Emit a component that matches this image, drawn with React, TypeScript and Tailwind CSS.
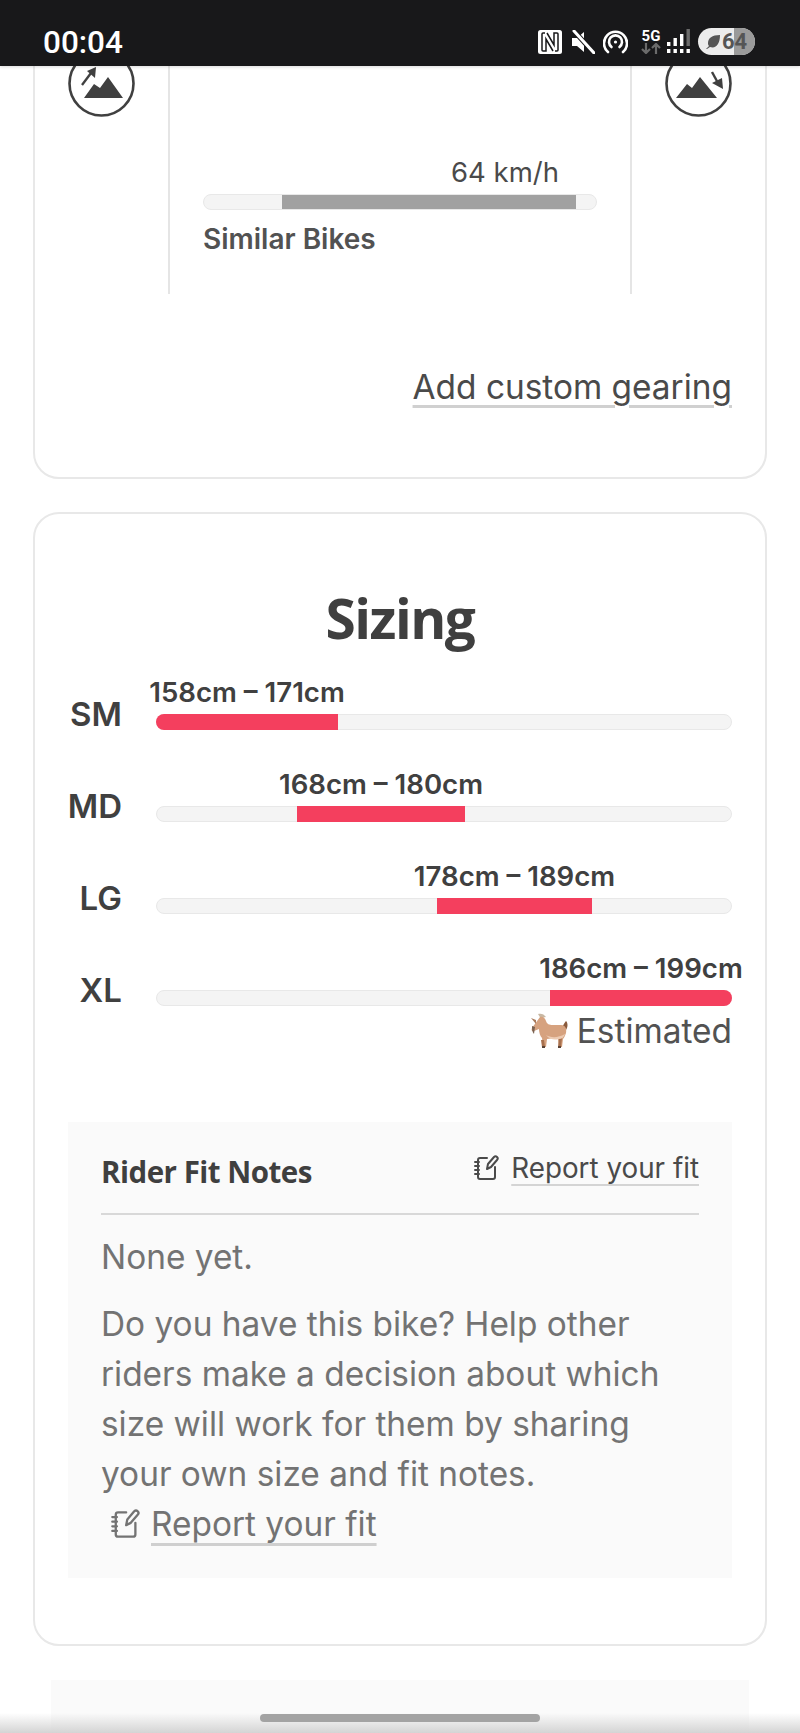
const ROWS = [
  { size: "SM", range: "158cm – 171cm", left: 0, width: 182, cls: "rounded-l-full" },
  { size: "MD", range: "168cm – 180cm", left: 141, width: 168, cls: "" },
  { size: "LG", range: "178cm – 189cm", left: 281, width: 155, cls: "" },
  { size: "XL", range: "186cm – 199cm", left: 394, width: 182, cls: "rounded-r-full" },
];

function Mountain({ down }: { down?: boolean }) {
  return (
    <svg viewBox="0 0 67 67" className="w-[67px] h-[67px] text-[#404040]">
      <circle cx="33.5" cy="33.5" r="32" fill="#fff" stroke="currentColor" strokeWidth="2.6" />
      <path d={down ? "M11 48 L22 34 L27 38 L35 27 L52 48 Z" : "M16 48 L26 34 L32 38 L40 27 L55 48 Z"} fill="currentColor" />
      {down ? (
        <>
          <path d="M47 22 L53 33" stroke="currentColor" strokeWidth="2.4" />
          <path d="M58 39 L47 33 L57 28 Z" fill="currentColor" />
        </>
      ) : (
        <>
          <path d="M14 35 L23 23" stroke="currentColor" strokeWidth="2.4" />
          <path d="M28 17 L19 21 L27 28 Z" fill="currentColor" />
        </>
      )}
    </svg>
  );
}

function Notebook({ className }: { className: string }) {
  return (
    <svg viewBox="0 0 26 26" fill="none" stroke="currentColor" strokeWidth="2" strokeLinecap="round" strokeLinejoin="round" className={className}>
      <path d="M14 3H7a2 2 0 0 0-2 2v17a2 2 0 0 0 2 2h13a2 2 0 0 0 2-2V12" />
      <path d="M2 7h4M2 11h4M2 15h4M2 19h4" />
      <path d="M14 14l1-5 6-7a2 2 0 0 1 3 3l-6 7z" />
    </svg>
  );
}

function Goat() {
  return (
    <svg viewBox="0 0 38 36" className="w-[38px] h-[36px]">
      <path d="M8 1c3-1 6 0 8 3l-5 1C10 4 9 3 8 1z" fill="#c9b8a3" />
      <path d="M32 14c2-3 3-5 4-6 2 2 2 6 0 9z" fill="#8a5a3c" />
      <path d="M10 4c3-1 5 1 6 4 1 3 3 4 7 4h8c4 0 6 3 5 8-1 3-2 5-3 6l-1 8h-3l-1-8-3-1-8 1-1 8h-3l-1-9c-2-2-3-6-3-9l-5 2c-2 1-3-1-2-3z" fill="#d6a27f" />
      <path d="M11 27h3l1 7h-3zM29 25h3l-1 9h-3z" fill="#a8714f" />
      <path d="M12 33h3v2h-3zM28 33h3v2h-3z" fill="#5a4336" />
      <path d="M16 22c5 3 12 3 19-1-1 3-3 5-6 5-4 1-9 1-13-4z" fill="#edcbb3" />
      <path d="M2 13l3 1-1 7c-2-2-2-5-2-8z" fill="#7a6252" />
      <path d="M6 7L1 5l5 6z" fill="#a87a5c" />
    </svg>
  );
}

function StatusIcons() {
  return (
    <div className="flex items-center h-[27px]">
      <svg viewBox="0 0 24 24" className="w-6 h-6">
        <rect width="24" height="24" rx="2.5" fill="#fff" />
        <path d="M7 3H5a1 1 0 0 0-1 1v16a1 1 0 0 0 1 1h3V9l7 12M17 21h2a1 1 0 0 0 1-1V4a1 1 0 0 0-1-1h-3v12L9 3" fill="none" stroke="#18181a" strokeWidth="1.5" />
      </svg>
      <svg viewBox="0 0 24 24" className="w-6 h-6 ml-[9px]">
        <path d="M1 8h5l7-6v20l-7-6H1z" fill="#fff" />
        <path d="M3 1l20 22" stroke="#18181a" strokeWidth="5" />
        <path d="M3 1l20 22" stroke="#fff" strokeWidth="3" strokeLinecap="round" />
      </svg>
      <svg viewBox="0 0 25 25" fill="none" stroke="#fff" strokeWidth="2.6" strokeLinecap="round" className="w-[25px] h-[25px] ml-2">
        <path d="M5 23A11.5 11.5 0 1 1 20 23" />
        <path d="M8.5 18a6.5 6.5 0 1 1 8 0" />
        <circle cx="12.5" cy="13" r="1.6" fill="#fff" stroke="none" />
      </svg>
      <div className="w-[22px] h-[25px] ml-3 flex flex-col items-center">
        <span className="text-white text-[15px] leading-[14px] font-bold [font-family:'Roboto',sans-serif]">5G</span>
        <svg viewBox="0 0 22 11" className="w-[22px] h-[11px]" fill="none" stroke="#6b6b6b" strokeWidth="2.2">
          <path d="M6 0v9M2 6l4 4 4-4M16 11V2M12 5l4-4 4 4" />
        </svg>
      </div>
      <svg viewBox="0 0 23 25" className="w-[23px] h-[25px] ml-[5px]" fill="#fff">
        <rect x="0" y="13" width="3.4" height="4" />
        <rect x="0" y="20" width="3.4" height="4" />
        <rect x="6.5" y="9" width="3.4" height="8" />
        <rect x="6.5" y="20" width="3.4" height="4" />
        <rect x="13" y="5" width="3.4" height="12" />
        <rect x="13" y="20" width="3.4" height="4" />
        <rect x="19.5" y="0" width="3.4" height="17" fill="#6b6b6b" />
        <rect x="19.5" y="20" width="3.4" height="4" />
      </svg>
      <div className="relative w-[57px] h-[27px] ml-2 rounded-full overflow-hidden bg-[#ececec] flex items-center">
        <div className="absolute right-0 top-0 bottom-0 w-[21px] bg-[#9a9a9a]" />
        <svg viewBox="0 0 14 14" className="relative w-[14px] h-[14px] ml-2" fill="#555">
          <path d="M14 0C6 0 2 3 2 8c0 1 0 2 1 3l-3 3 1 0 3-2c6 2 10-3 10-12z" />
        </svg>
        <span className="relative ml-[2px] text-[22px] leading-none font-bold text-[#555] [font-family:'Roboto',sans-serif]">64</span>
      </div>
    </div>
  );
}

export default function App() {
  return (
    <div className="relative w-[800px] h-[1733px] overflow-hidden bg-white text-[#404040] [font-family:'Inter',sans-serif]">
      <div className="relative z-10 h-[66px] bg-[#18181a] shadow-[0_1px_3px_rgba(0,0,0,0.15)] flex items-end justify-between pl-[43px] pr-[45px] pb-[11px]">
        <span className="relative top-[4px] text-white text-[31.5px] leading-[33px] font-medium [font-family:'Roboto',sans-serif]">00:04</span>
        <StatusIcons />
      </div>

      <div className="-mt-[46px] mx-[33px] h-[459px] border-2 border-[#e8e8e8] rounded-[26px] px-[33px]">
        <div className="-mx-[33px] h-[272px] grid grid-cols-[133px_464px_1fr]">
          <div className="flex justify-center pt-[28px]"><Mountain /></div>
          <div className="border-x-2 border-[#e5e5e5] px-[33px] pt-[133px]">
            <div className="relative h-[35px]">
              <span className="absolute left-[229px] top-0 w-[146px] text-center text-[27.5px] leading-[35px] text-[#4a4a4a]">64 km/h</span>
            </div>
            <div className="mt-[4px] h-[16px] rounded-full bg-[#f4f4f4] border border-[#e8e8e8] overflow-hidden relative">
              <div className="absolute top-[-1px] bottom-[-1px] left-[78px] w-[294px] bg-[#a1a1a1]" />
            </div>
            <div className="mt-[11px] text-[28px] leading-[36px] font-semibold text-[#525252]">Similar Bikes</div>
          </div>
          <div className="flex justify-center pt-[28px]"><Mountain down /></div>
        </div>
        <div className="mt-[73px] flex justify-end">
          <span className="text-[33.4px] leading-[40px] text-[#4a4a4a] underline decoration-[#d0d0d0] decoration-[3px] underline-offset-[6px]">Add custom gearing</span>
        </div>
      </div>

      <div className="mt-[33px] mx-[33px] h-[1134px] border-2 border-[#e8e8e8] rounded-[26px] px-[33px] pt-[72px] relative">
        <h2 className="text-center text-[55px] leading-[64px] font-bold text-[#3f3f3f] [font-family:'Open_Sans',sans-serif] tracking-[-1.5px]">Sizing</h2>
        <div className="mt-[63.5px] flex flex-col gap-[76px]">
          {ROWS.map((r) => (
            <div key={r.size} className="flex items-end h-[16px]">
              <span className="w-[87px] -ml-[33px] text-right text-[33px] leading-[40px] font-semibold text-[#404040] shrink-0 relative top-[-8px] self-center">{r.size}</span>
              <div className="relative ml-[34px] w-[576px] h-[16px] rounded-full bg-[#f4f4f4] border border-[#e8e8e8]">
                <div className={`absolute top-[-1px] bottom-[-1px] bg-[#f43f5e] ${r.cls}`} style={{ left: r.left - 1, width: r.width }}>
                  <span className="absolute left-1/2 -translate-x-1/2 -top-[39px] text-[27.6px] leading-[34px] font-semibold whitespace-nowrap text-[#404040]">{r.range}</span>
                </div>
              </div>
            </div>
          ))}
        </div>
        <div className="mt-[3px] flex justify-end items-center gap-[9px] text-[33.4px] leading-[44px] text-[#525252]">
          <Goat />
          <span>Estimated</span>
        </div>

        <div className="mt-[69px] h-[456px] bg-[#fafafa] px-[33px] pt-[28px]">
          <div className="h-[65px] border-b-2 border-[#d8d8d8] flex justify-between">
            <span className="text-[29.5px] leading-[44px] font-bold text-[#3f3f3f] tracking-[-0.5px] [font-family:'Open_Sans',sans-serif]">Rider Fit Notes</span>
            <span className="flex items-start gap-[12px] text-[#4a4a4a]">
              <Notebook className="w-[26px] h-[26px] mt-[5px]" />
              <span className="text-[27.8px] leading-[36px] underline decoration-[#d4d4d4] decoration-2 underline-offset-[6px]">Report your fit</span>
            </span>
          </div>
          <p className="mt-[20px] text-[33.4px] leading-[44px] text-[#737373]">None yet.</p>
          <p className="mt-[20px] w-[596px] text-[33.4px] leading-[50px] text-[#737373]">
            Do you have this bike? Help other riders make a decision about which size will work for them by sharing your own size and fit notes.
          </p>
          <div className="mt-[3px] ml-[9px] flex items-center gap-[11px] text-[#737373]">
            <Notebook className="w-[30px] h-[30px]" />
            <span className="text-[33.4px] leading-[44px] underline decoration-[#cfcfcf] decoration-[3px] underline-offset-[7px]">Report your fit</span>
          </div>
        </div>
      </div>

      <div className="mt-[34px] mx-[51px] h-[60px] bg-[#fafafa]" />

      <div className="absolute inset-x-0 bottom-0 h-[20px] bg-gradient-to-b from-transparent to-[#d4d4d4] pointer-events-none" />
      <div className="absolute left-[260px] bottom-[11px] w-[280px] h-[8px] rounded-full bg-[#a3a3a3]" />
    </div>
  );
}
